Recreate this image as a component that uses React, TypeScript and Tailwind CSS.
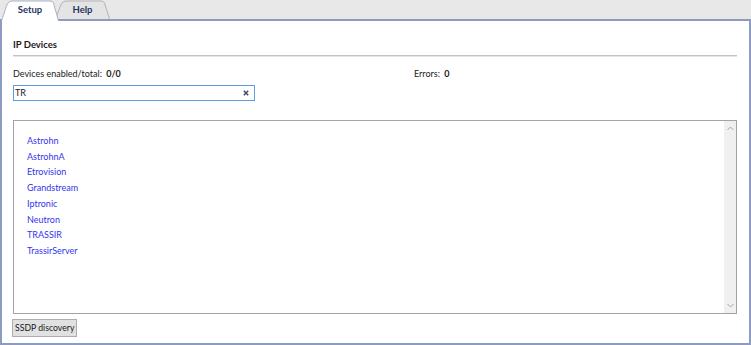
import React from 'react';

const devices = ['Astrohn', 'AstrohnA', 'Etrovision', 'Grandstream', 'Iptronic', 'Neutron', 'TRASSIR', 'TrassirServer'];

const Tab = ({ label, active }: { label: string; active?: boolean }) => (
    <div
        className={
            active
                ? 'relative z-10 w-[58px] h-[21px] -mb-[2px] flex justify-center pt-[3px]'
                : 'relative w-[55px] h-[19px] -ml-[4px] flex justify-center pt-[3px]'
        }
    >
        <svg className="absolute inset-0" width={active ? 58 : 55} height={active ? 21 : 19}>
            {active ? (
                <path
                    d="M0.5 21 C3 14 5 6 7 3 Q8.5 1 11 1 L49 1 Q51.5 1 52.5 3 L57.5 21"
                    fill="#ffffff"
                    stroke="#a7b1c7"
                />
            ) : (
                <path
                    d="M0.5 19 C3 13 5 6 7 3 Q8.5 1 11 1 L46 1 Q48.5 1 49.5 3 L54.5 19"
                    fill="#e4e4e4"
                    stroke="#b3b3b3"
                />
            )}
        </svg>
        <span className="relative text-[9.5px] font-bold text-[#1f3561] leading-[14px]">{label}</span>
    </div>
);

const Chevron = ({ up }: { up?: boolean }) => (
    <svg width="7" height="5" viewBox="0 0 7 5">
        <path d={up ? 'M0.5 4 L3.5 1 L6.5 4' : 'M0.5 1 L3.5 4 L6.5 1'} fill="none" stroke="#a6a6a6" strokeWidth="1" />
    </svg>
);

export default function App() {
    return (
        <div
            className="w-[751px] h-[345px] bg-[#e8e8e8] flex flex-col text-[#1b1b1b]"
            style={{ fontFamily: 'Lato, "Noto Sans", sans-serif' }}
        >
            <div className="flex items-end h-[19px] pl-[1px] shrink-0">
                <Tab label="Setup" active />
                <Tab label="Help" />
            </div>
            <div className="flex-1 bg-white border-2 border-[#8e9bc0] flex flex-col pl-[11px] pr-[12px]">
                <div className="mt-[17px] text-[9.5px] font-bold leading-[14px]">IP Devices</div>
                <div className="mt-[3px] h-[2px] border-t border-[#c3c3c3] bg-[#e6e6e6]" />
                <div className="mt-[10px] flex text-[9px] leading-[14px]">
                    <div className="w-[401px]">
                        Devices enabled/total: <span className="font-bold ml-[2px]">0/0</span>
                    </div>
                    <div>
                        Errors: <span className="font-bold ml-[2px]">0</span>
                    </div>
                </div>
                <div className="mt-[4px] w-[242px] h-[16px] border border-[#5d9de3] flex items-center pl-[1px] pr-[5px]">
                    <span className="flex-1 text-[9px] leading-[14px]">TR</span>
                    <svg width="6" height="6" viewBox="0 0 6 6">
                        <path d="M0.8 0.8 L5.2 5.2 M5.2 0.8 L0.8 5.2" stroke="#3d4a6e" strokeWidth="1.5" />
                    </svg>
                </div>
                <div className="mt-[19px] h-[194px] border border-[#a3a3a3] flex">
                    <div className="flex-1 pl-[13px] pt-[12px]">
                        {devices.map((d) => (
                            <div key={d} className="text-[9px] leading-[15.7px] text-[#3434ee]">
                                {d}
                            </div>
                        ))}
                    </div>
                    <div className="w-[12px] bg-[#f0f0f0] flex flex-col items-center justify-between py-[5px]">
                        <Chevron up />
                        <Chevron />
                    </div>
                </div>
                <div className="mt-[5px] -ml-[1px] flex">
                    <button className="h-[18px] px-[2px] bg-[#e1e1e1] border border-[#adadad] text-[8.7px] leading-[14px] text-[#1b1b1b]">
                        SSDP discovery
                    </button>
                </div>
            </div>
        </div>
    );
}
